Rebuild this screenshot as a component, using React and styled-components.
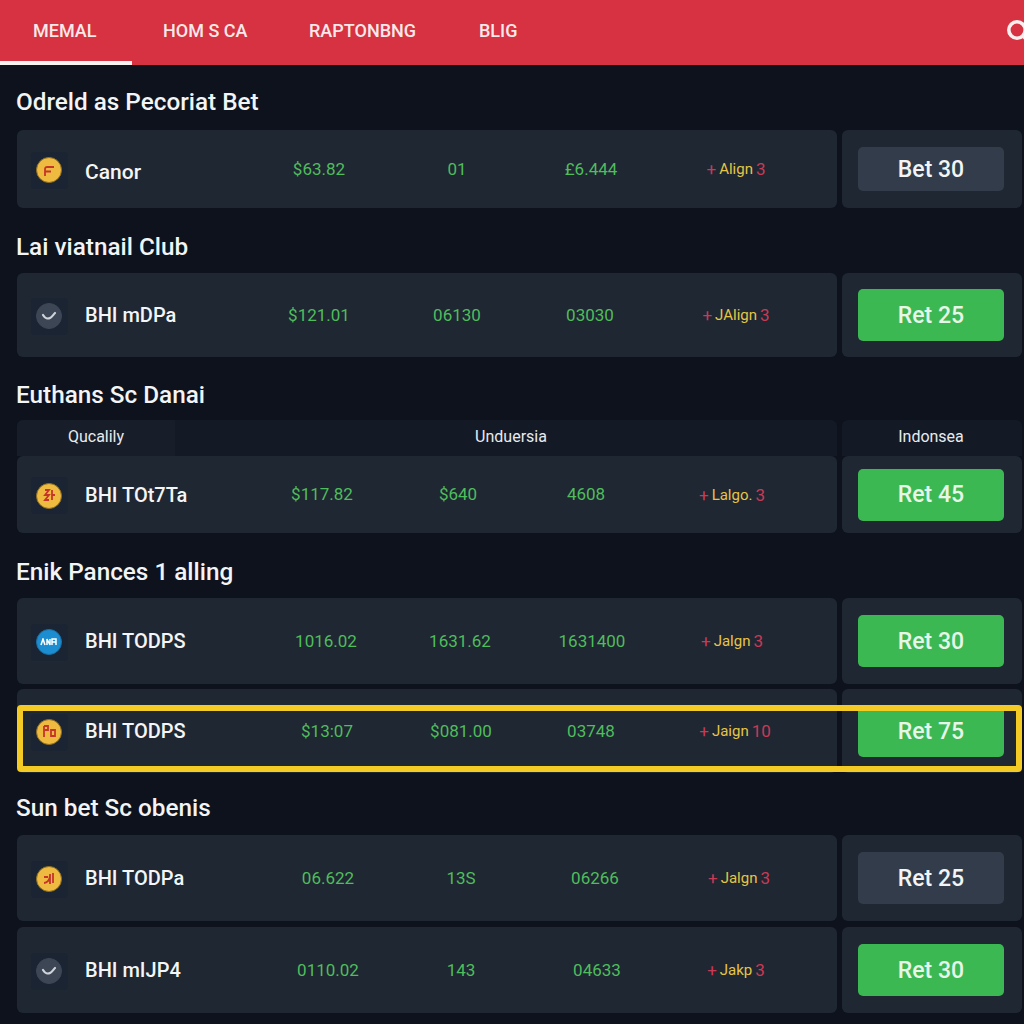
import React from 'react';
import styled, { createGlobalStyle } from 'styled-components';

const GlobalStyle = createGlobalStyle`
    html, body {
        margin: 0;
        padding: 0;
        width: 1024px;
        height: 1024px;
        overflow: hidden;
        background: #0d121c;
        font-family: Roboto, "Liberation Sans", sans-serif;
    }
`

const tabs = [
    { label: 'MEMAL', width: 132, active: true },
    { label: 'HOM S CA', width: 146 },
    { label: 'RAPTONBNG', width: 170 },
    { label: 'BLIG', width: 110 },
];

// "at" holds the centre of each value column, measured from the left of the page
const sections = [
    {
        title: 'Odreld as Pecoriat Bet', top: 23, gap: 14,
        rows: [{ coin: 'f', name: 'Canor', lead: true, height: 78, at: [319, 457, 591, 736], values: ['$63.82', '01', '£6.444'], tag: ['Align', '3'], bet: 'Bet 30', buttonHeight: 44, muted: true }],
    },
    {
        title: 'Lai viatnail Club', top: 25, gap: 12,
        rows: [{ coin: 'smile', name: 'BHI mDPa', height: 84, at: [319, 457, 590, 736], values: ['$121.01', '06130', '03030'], tag: ['JAlign', '3'], bet: 'Ret 25' }],
    },
    {
        title: 'Euthans Sc Danai', top: 24, gap: 11,
        heads: ['Qucalily', 'Unduersia', 'Indonsea'],
        rows: [{ coin: 'z', name: 'BHI TOt7Ta', height: 77, at: [322, 458, 586, 732], values: ['$117.82', '$640', '4608'], tag: ['Lalgo.', '3'], bet: 'Ret 45' }],
    },
    {
        title: 'Enik Pances 1 alling', top: 25, gap: 12,
        rows: [
            { coin: 'blue', name: 'BHI TODPS', height: 86, at: [326, 460, 592, 732], values: ['1016.02', '1631.62', '1631400'], tag: ['Jalgn', '3'], bet: 'Ret 30' },
            { coin: 'p', name: 'BHI TODPS', height: 84, at: [327, 461, 591, 735], values: ['$13:07', '$081.00', '03748'], tag: ['Jaign', '10'], bet: 'Ret 75', highlight: true },
        ],
    },
    {
        title: 'Sun bet Sc obenis', top: 21, gap: 13, listGap: 6,
        rows: [
            { coin: 'a', name: 'BHI TODPa', height: 86, at: [328, 461, 595, 739], values: ['06.622', '13S', '06266'], tag: ['Jalgn', '3'], bet: 'Ret 25', muted: true },
            { coin: 'smile', name: 'BHI mIJP4', height: 86, at: [328, 461, 597, 736], values: ['0110.02', '143', '04633'], tag: ['Jakp', '3'], bet: 'Ret 30' },
        ],
    },
];

const NAME_END = 255;
const INFO_LEFT = 17;

// turns the centres into grid tracks so each value sits on its own centre
const columnsFor = at => {
    let edge = NAME_END;
    const tracks = at.map(centre => {
        const width = 2 * (centre - edge);
        edge += width;
        return `${width}px`;
    });
    return `68px ${NAME_END - INFO_LEFT - 68}px ${tracks.join(' ')}`;
};

const CoinMark = ({ kind }) => {
    if (kind === 'smile') {
        return (
            <svg width="16" height="12" viewBox="0 0 16 12" fill="none" stroke="#cfd4db" strokeWidth="2.2" strokeLinecap="round">
                <path d="M2 5c2 3.5 5 4 7 3s3-3 5-5" />
            </svg>
        );
    }
    if (kind === 'blue') {
        return (
            <svg width="18" height="8" viewBox="0 0 18 8" fill="none" stroke="#ffffff" strokeWidth="1.5">
                <path d="M1 7l2-6 2 6M7 7V1l3 6V1M12 7V1h4v6M12 4h4" />
            </svg>
        );
    }
    const marks = {
        f: 'M5 15V8c0-1.5 1-2 2-2h7M5 10.5h6',
        z: 'M5 3h4L5 8h4L5 13h4M12 3v10M12 8h3',
        p: 'M4 3v11M4 3h4v4H4M11 7h4v6h-4z',
        a: 'M4 13c3 0 6-3 6-8M10 4v10M13 3v10M4 7h4',
    };
    return (
        <svg width="18" height="18" viewBox="0 0 18 18" fill="none" stroke="#c5352a" strokeWidth="1.8">
            <path d={marks[kind]} />
        </svg>
    );
};

const Row = ({ row }) => (
    <BetRow $height={row.height}>
        <Info $columns={columnsFor(row.at)}>
            <CoinBox>
                <Coin $kind={row.coin}><CoinMark kind={row.coin} /></Coin>
            </CoinBox>
            <Name $lead={row.lead}>{row.name}</Name>
            {row.values.map((value, i) => <Value key={i}>{value}</Value>)}
            <Tag>
                <Plus>+</Plus>
                <TagWord>{row.tag[0]}</TagWord>
                <Plus>{row.tag[1]}</Plus>
            </Tag>
        </Info>
        <Action>
            <BetButton $muted={row.muted} $height={row.buttonHeight}>{row.bet}</BetButton>
        </Action>
        {row.highlight && <Highlight />}
    </BetRow>
);

export default function App() {
    return (
        <>
            <GlobalStyle />
            <Header>
                {tabs.map(tab => (
                    <Tab key={tab.label} $width={tab.width} $active={tab.active}>{tab.label}</Tab>
                ))}
                <SearchIcon width="30" height="30" viewBox="0 0 30 30" fill="none" stroke="#f8eeee" strokeWidth="3.6">
                    <circle cx="11" cy="11" r="8.2" />
                    <path d="M17 17l8 8" />
                </SearchIcon>
            </Header>
            <Main>
                {sections.map(section => (
                    <Section key={section.title} $top={section.top}>
                        <Title $gap={section.gap}>{section.title}</Title>
                        {section.heads && (
                            <HeadStrip>
                                <HeadMain>
                                    <HeadFirst>{section.heads[0]}</HeadFirst>
                                    <HeadCell>{section.heads[1]}</HeadCell>
                                </HeadMain>
                                <HeadLast>{section.heads[2]}</HeadLast>
                            </HeadStrip>
                        )}
                        <List $gap={section.listGap}>
                            {section.rows.map((row, i) => <Row key={i} row={row} />)}
                        </List>
                    </Section>
                ))}
            </Main>
        </>
    )
}

const Header = styled.header`
    height: 65px;
    background: #d63241;
    display: flex;
    align-items: stretch;
    position: relative;
    overflow: hidden;
`

const Tab = styled.div`
    width: ${p => p.$width}px;
    box-sizing: border-box;
    padding-left: ${p => p.$active ? 33 : 31}px;
    display: flex;
    align-items: center;
    color: #f7e9ea;
    font-size: 18px;
    font-weight: 500;
    white-space: nowrap;
    border-bottom: 4px solid ${p => p.$active ? '#f7f3f2' : 'transparent'};
`

const SearchIcon = styled.svg`
    position: absolute;
    top: 19px;
    left: 1006px;
`

const Main = styled.main`
    padding: 0 2px 0 17px;
`

const Section = styled.section`
    padding-top: ${p => p.$top}px;
`

const Title = styled.h2`
    margin: 0 0 ${p => p.$gap}px -1px;
    color: #f2f4f6;
    font-size: 24.3px;
    font-weight: 500;
    line-height: 28px;
`

const List = styled.div`
    display: flex;
    flex-direction: column;
    gap: ${p => p.$gap || 5}px;
`

const BetRow = styled.div`
    position: relative;
    height: ${p => p.$height}px;
    display: grid;
    grid-template-columns: 820px 180px;
    gap: 5px;
`

const Info = styled.div`
    display: grid;
    grid-template-columns: ${p => p.$columns};
    align-items: center;
    background: #1f2733;
    border-radius: 6px;
`

const CoinBox = styled.div`
    width: 37px;
    height: 37px;
    margin-left: 14px;
    margin-top: 2px;
    display: flex;
    align-items: center;
    justify-content: center;
    background: #1b2432;
    border-radius: 4px;
`

const Coin = styled.div`
    width: 26px;
    height: 26px;
    margin-right: 1px;
    box-sizing: border-box;
    border-radius: 50%;
    display: flex;
    align-items: center;
    justify-content: center;
    background: ${p => p.$kind === 'blue' ? '#1b8dd0' : p.$kind === 'smile' ? '#3d4655' : '#efba40'};
    border: 1px solid ${p => p.$kind === 'smile' ? '#3d4655' : p.$kind === 'blue' ? '#1a6fa6' : '#8f6f22'};
`

const Name = styled.div`
    color: #f4f5f6;
    font-size: ${p => p.$lead ? 21 : 20}px;
    font-weight: 500;
    white-space: nowrap;
    padding-top: ${p => p.$lead ? 5 : 0}px;
`

const Value = styled.div`
    color: #4fbd5c;
    font-size: 17px;
    text-align: center;
    white-space: nowrap;
    padding-bottom: 1px;
`

const Tag = styled.div`
    display: flex;
    justify-content: center;
    align-items: center;
    gap: 3px;
    font-size: 15px;
    white-space: nowrap;
`

const Plus = styled.span`
    color: #c93a55;
    font-size: 17px;
`

const TagWord = styled.span`
    color: #e6c544;
`

const Action = styled.div`
    display: flex;
    align-items: center;
    justify-content: center;
    padding-right: 2px;
    background: #1f2733;
    border-radius: 6px;
`

const BetButton = styled.button`
    width: 146px;
    height: ${p => p.$height || 52}px;
    border: none;
    border-radius: 5px;
    background: ${p => p.$muted ? '#323c4a' : '#3cb853'};
    color: ${p => p.$muted ? '#f2f4f6' : '#e6f6e8'};
    font-family: inherit;
    font-size: 23px;
    font-weight: 500;
`

const Highlight = styled.div`
    position: absolute;
    top: 16px;
    left: 0;
    width: 1005px;
    height: 67px;
    box-sizing: border-box;
    border: 6px solid #f4cb25;
    border-radius: 4px;
    pointer-events: none;
`

const HeadStrip = styled.div`
    height: 36px;
    display: grid;
    grid-template-columns: 820px 180px;
    gap: 5px;
    color: #e8ebee;
    font-size: 16px;
`

const HeadMain = styled.div`
    display: grid;
    grid-template-columns: 158px 1fr;
    background: #131a26;
    border-radius: 6px 6px 0 0;
    overflow: hidden;
`

const HeadFirst = styled.div`
    display: flex;
    align-items: center;
    justify-content: center;
    padding-bottom: 4px;
    background: #171e2a;
`

const HeadCell = styled.div`
    display: flex;
    align-items: center;
    justify-content: center;
    padding: 0 0 4px 10px;
`

const HeadLast = styled.div`
    display: flex;
    align-items: center;
    justify-content: center;
    padding: 0 2px 4px 0;
    background: #131a26;
    border-radius: 6px 6px 0 0;
`
